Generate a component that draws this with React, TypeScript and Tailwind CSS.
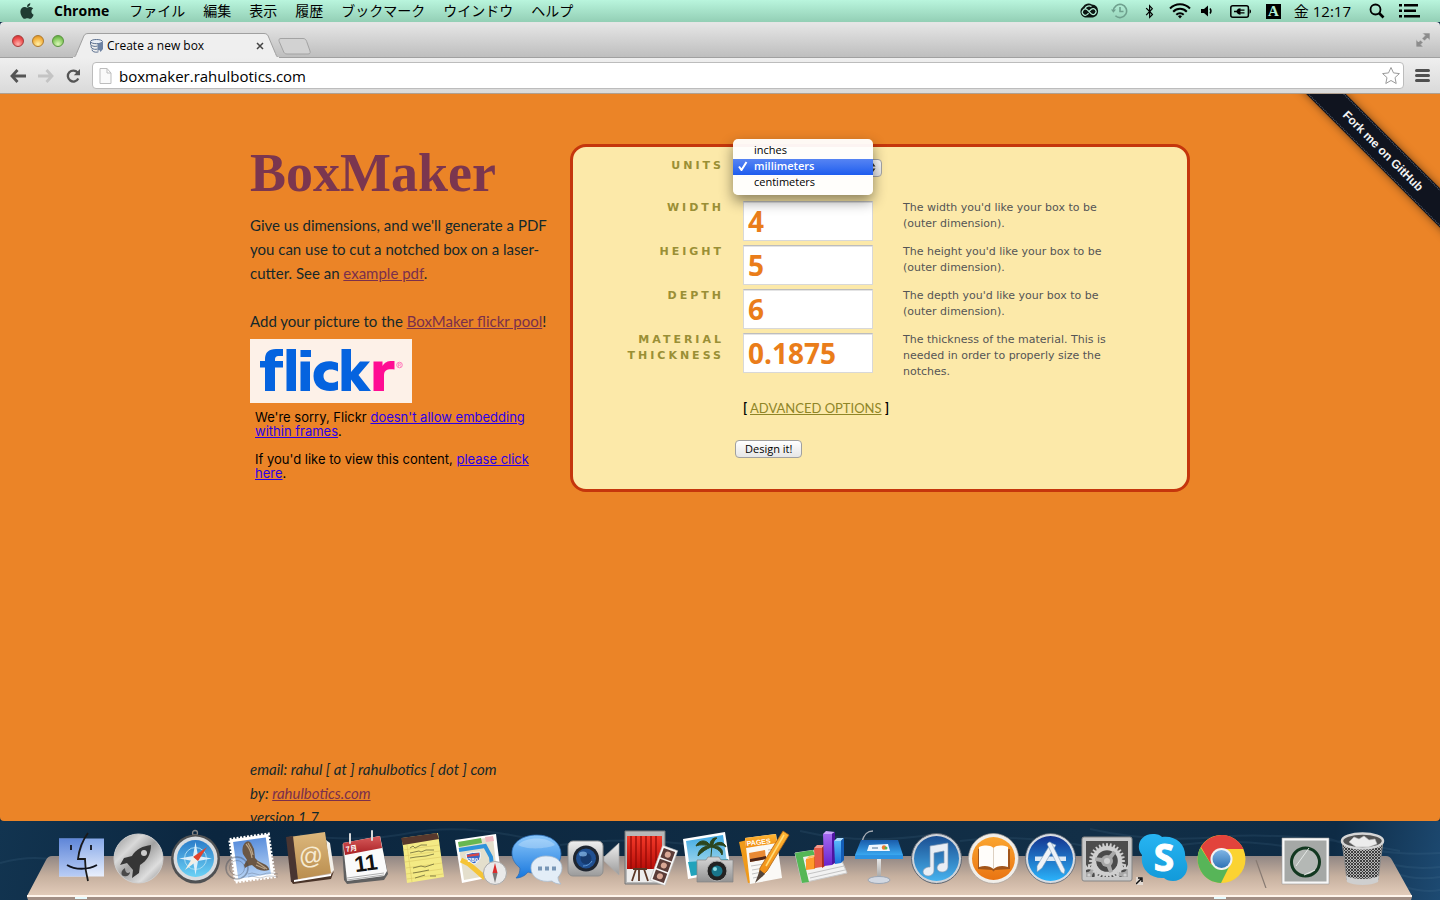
import type { ReactNode } from "react";
import { FaApple, FaBluetoothB } from "react-icons/fa";

const UI_FONT = "font-['Open_Sans','Noto_Sans_CJK_JP',sans-serif]";
const GILL = "font-[Lato,sans-serif]";

const menus = ["ファイル", "編集", "表示", "履歴", "ブックマーク", "ウインドウ", "ヘルプ"];

function MenuBar() {
  return (
    <header
      className={`${UI_FONT} flex h-[22px] shrink-0 items-center justify-between bg-linear-to-b from-[#b9f5dd] to-[#93cfb5] pr-5 pl-[18px] text-sm leading-5 text-black`}
    >
      <nav className="flex items-center gap-[18px]">
        <FaApple className="size-[18px] text-[#1f3b32]" aria-label="Apple" />
        <span className="mr-[2px] font-bold">Chrome</span>
        {menus.map((m) => (
          <span key={m}>{m}</span>
        ))}
      </nav>
      <div className="flex items-center">
        <svg width="20" height="16" viewBox="0 0 20 16" className="mr-3" aria-hidden="true">
          <path d="M6 14.500A6 6 0 0 1 4 3.800 6.500 6.500 0 0 1 13 1.500a6.600 6.600 0 0 1 1 13Z" fill="#0b1512" />
          <path d="M9.600 10.200 8.300 11.400a3 3 0 1 1 0-4.500l4 3.900a2.900 2.900 0 1 0 0-4.500L10 8.500M6 5.600a4.500 4.500 0 0 1 6.500-2" fill="none" stroke="#b4eed6" strokeWidth="1.200" />
        </svg>
        <svg width="17" height="16" viewBox="0 0 17 16" className="mr-[17px]" fill="none" stroke="#6fa08e" strokeWidth="1.600" aria-hidden="true">
          <path d="M2.400 8a6.600 6.600 0 1 1 2 4.700M9 4v4.500h3.500" />
          <path d="M0 6.500h5L2.400 9.800Z" fill="#6fa08e" stroke="none" />
        </svg>
        <FaBluetoothB className="mr-[15px] h-[15px] w-[9px]" />
        <svg width="22" height="16" viewBox="0 0 22 16" className="mr-[10px]" fill="none" stroke="#000" strokeWidth="2" aria-hidden="true">
          <path d="M1 5.500a14 14 0 0 1 20 0M4.200 8.700a9.500 9.500 0 0 1 13.600 0M7.300 11.700a5.200 5.200 0 0 1 7.400 0" />
          <path d="m11 15.500-2-2.200a2.900 2.900 0 0 1 4 0Z" fill="#000" stroke="none" />
        </svg>
        <svg width="13" height="12" viewBox="0 0 13 12" className="mr-4" aria-hidden="true">
          <path d="M0 4h3l4-3.500v11L3 8H0Z" />
          <path d="M9 3.500a4 4 0 0 1 0 5" fill="none" stroke="#000" strokeWidth="1.400" />
        </svg>
        <svg width="22" height="13" viewBox="0 0 22 13" className="mr-[14px]" aria-hidden="true">
          <rect x="0.800" y="0.800" width="17.600" height="11.400" rx="2" fill="none" stroke="#000" strokeWidth="1.500" />
          <path d="M19.500 4.300c2 .6 2 3.800 0 4.400Z" />
          <path d="M4 5.700h2.500C7.300 4 8.700 3.200 10.500 3.200v1.200h4v1.300h-4v1.500h4v1.300h-4v1.200C8.700 9.700 7.300 9 6.500 7.300H4Z" />
        </svg>
        <span className="mr-[13px] flex h-[15px] w-[15px] items-center justify-center bg-black font-['Liberation_Serif',serif] text-[15px] font-bold text-[#b4eed6]">
          A
        </span>
        <span className="mr-[18px] text-[15px]">金 12:17</span>
        <svg width="16" height="16" viewBox="0 0 16 16" className="mr-[14px]" fill="none" stroke="#000" strokeWidth="1.800" aria-hidden="true">
          <circle cx="6.500" cy="6.500" r="5" />
          <path d="m10 10 4.500 4.500" strokeWidth="2.600" />
        </svg>
        <svg width="21" height="14" viewBox="0 0 21 14" aria-hidden="true">
          <path d="M0 0h3v2.500H0zM0 5.500h3V8H0zM0 11h3v2.500H0zM5 0h14v2.500H5zM5 5.500h12V8H5zM5 11h16v2.500H5z" />
        </svg>
      </div>
    </header>
  );
}

function TabStrip() {
  return (
    <div
      className={`${UI_FONT} flex h-9 shrink-0 items-end justify-between rounded-t border-t border-white/60 bg-linear-to-b from-[#e6e6e6] to-[#bdbdbd] text-xs text-black shadow-[inset_0_-1px_0_#a0a0a0]`}
    >
      <div className="flex items-end">
        <div className="flex items-center gap-2 pb-[11px] pl-3">
          <button aria-label="Close window" className="size-3 rounded-full border border-[#a63a3a] bg-[radial-gradient(circle_at_50%_80%,#ffb4ae,#ee4c4c_60%,#c62b2b)]" />
          <button aria-label="Minimize window" className="size-3 rounded-full border border-[#b07a2c] bg-[radial-gradient(circle_at_50%_80%,#fff0a8,#f4b23e_60%,#cf8420)]" />
          <button aria-label="Zoom window" className="size-3 rounded-full border border-[#5a9440] bg-[radial-gradient(circle_at_50%_80%,#dcf7b8,#83c95c_60%,#519a35)]" />
        </div>
        <div className="relative ml-2 flex h-[25px] w-[208px] items-center pr-4 pl-[18px]">
          <svg className="absolute inset-0 size-full" viewBox="0 0 208 25" preserveAspectRatio="none" aria-hidden="true">
            <path d="M0 25c3 0 3.500-2 4.500-4.500L11 5c1-3 2-4.500 5-4.500h176c3 0 4 1.500 5 4.500l6.500 15.500c1 2.500 1.500 4.500 4.500 4.500Z" fill="#efefef" stroke="#a0a0a0" />
            <path d="M1 25h206" stroke="#efefef" strokeWidth="2" />
          </svg>
          <svg width="14" height="14" viewBox="0 0 14 14" className="relative mr-[3px] shrink-0" fill="none" stroke="#5b6f8e" aria-hidden="true">
            <ellipse cx="6.500" cy="2.600" rx="6" ry="2.100" fill="#e9eef6" />
            <path d="M.5 3v2.500c2 2.200 5 2.200 7 1.500M.8 6.500 1.500 9c2 1.500 4 1.600 6 1M2 10.500l.5 1.500c1.500 1.300 4 1.500 6 .8" />
            <path d="M7.500 4.500 13 3v7l-2.500 3-1-2-2 1Z" fill="#6d82a3" stroke="none" />
          </svg>
          <span className="relative">Create a new box</span>
          <button aria-label="Close tab" className="relative ml-auto">
            <svg width="8" height="8" viewBox="0 0 8 8" stroke="#444" strokeWidth="1.500" aria-hidden="true">
              <path d="m1 1 6 6M7 1 1 7" />
            </svg>
          </button>
        </div>
        <button aria-label="New tab" className="-ml-[2px] mb-[3px]">
          <svg width="34" height="17" viewBox="0 0 34 17" aria-hidden="true">
            <path d="M3 .5h22c2 0 3 1 3.700 3l3.300 9.500c.7 2-.2 3-2 3H9c-2 0-3-1-3.700-3L1.200 3.500C.6 1.500 1 .5 3 .5Z" fill="#d2d2d2" stroke="#a3a3a3" />
          </svg>
        </button>
      </div>
      <svg width="14" height="14" viewBox="0 0 14 14" className="mr-[10px] mb-[11px]" fill="#8c8c8c" aria-hidden="true">
        <path d="M6.500 0H14v7.500l-2.500-2.500-3 3L6 5.500l3-3ZM7.500 14H0V6.500L2.500 9l2-2L7 9.500l-2 2Z" stroke="#d8d8d8" strokeWidth=".6" />
      </svg>
    </div>
  );
}

function Toolbar() {
  return (
    <div className={`${UI_FONT} flex h-9 shrink-0 items-center border-b border-[#b0a090] bg-linear-to-b from-[#efefef] to-[#dadada] pr-[10px] pl-[10px]`}>
      <button aria-label="Back" className="mr-3">
        <svg width="16" height="14" viewBox="0 0 16 14" fill="none" stroke="#555" strokeWidth="2.800" aria-hidden="true">
          <path d="M7.500 1 2 7l5.500 6M2.500 7H16" />
        </svg>
      </button>
      <button aria-label="Forward" className="mr-3">
        <svg width="16" height="14" viewBox="0 0 16 14" fill="none" stroke="#c4c4c4" strokeWidth="2.800" aria-hidden="true">
          <path d="M8.500 1 14 7l-5.500 6M13.500 7H0" />
        </svg>
      </button>
      <button aria-label="Reload" className="mr-[11px]">
        <svg width="15" height="14" viewBox="0 0 15 14" fill="none" stroke="#555" strokeWidth="2.300" aria-hidden="true">
          <path d="M11.600 3.500A5.500 5.500 0 1 0 12.300 9.500" />
          <path d="M14 0v6.200H7.800Z" fill="#555" stroke="none" />
        </svg>
      </button>
      <div className="flex h-[27px] min-w-0 flex-1 items-center rounded-sm border border-[#bcbcbc] bg-white px-[6px]">
        <svg width="13" height="16" viewBox="0 0 13 16" className="mr-[7px] shrink-0" fill="#fafafa" stroke="#bdbdbd" aria-hidden="true">
          <path d="M1 .5h7L12 5v10.500H1ZM8 .5V5h4" />
        </svg>
        <input
          aria-label="Address"
          defaultValue="boxmaker.rahulbotics.com"
          className="min-w-0 flex-1 bg-transparent text-[15px] leading-5 text-black outline-none"
        />
        <svg width="20" height="19" viewBox="0 0 20 19" className="-mr-1 shrink-0" fill="none" stroke="#9a9a9a" strokeLinejoin="round" aria-hidden="true">
          <path d="m10 1.500 2.500 5.400 5.900.7-4.400 4 1.200 5.900-5.200-3-5.200 3L6 11.600l-4.400-4 5.900-.7Z" />
        </svg>
      </div>
      <button aria-label="Chrome menu" className="ml-[11px]">
        <svg width="15" height="13" viewBox="0 0 15 13" stroke="#4f4f4f" strokeWidth="3" strokeLinecap="round" aria-hidden="true">
          <path d="M1.500 1.500h12M1.500 6.500h12M1.500 11.500h12" />
        </svg>
      </button>
    </div>
  );
}

const link = "text-[#7a2f4c] underline";

function Intro() {
  return (
    <section className={`${GILL} w-[300px] shrink-0 text-[15px] leading-6 whitespace-nowrap text-[#14282b]`}>
      <h1 className="font-['Liberation_Serif',serif] text-[54px] leading-[58px] font-bold text-[#7b364f]">BoxMaker</h1>
      <p className="mt-[11px]">
        Give us dimensions, and we'll generate a PDF
        <br />
        you can use to cut a notched box on a laser-
        <br />
        cutter. See an{" "}
        <a href="#example" className={link}>
          example pdf
        </a>
        .
      </p>
      <p className="mt-6">
        Add your picture to the{" "}
        <a href="#pool" className={link}>
          BoxMaker flickr pool
        </a>
        !
      </p>
      <div className="mt-[6px] h-16 w-[162px] bg-[#fdf1e8]">
        <svg width="162" height="64" viewBox="0 0 162 64" role="img" aria-label="flickr">
          <g fill="#0563df">
            <path d="M15 52V28.500h-5V22h5v-1.500C15 13.500 18.500 10 26 10h7v7h-4c-3 0-4 1-4 4v1h8v6.500h-8V52Z" />
            <path d="M36.500 10H46v42h-9.500ZM50.500 11H61v7H50.500ZM50.500 22.500H60V52h-9.500ZM91.500 10H101v23l9-10.500h10L108.500 36 121 52h-11.500L101 40.500V52h-9.500Z" />
            <path d="M88 24v8.500C80 28.500 73.500 31 73.500 37S80 46 88 42v8.800C76 54.500 63.500 50 63.500 37S76 19.500 88 24Z" />
          </g>
          <path d="M123.500 22.500h9V27c2.500-4.500 6-5.500 12-5v8.500c-7-.8-10.500.5-10.500 6V52h-10.500Z" fill="#ff0c93" />
          <circle cx="149.500" cy="26" r="2.800" fill="none" stroke="#ff5fb0" strokeWidth=".8" />
          <path d="M148.500 27.800v-3.300h1.300c1.200 0 1.200 1.600 0 1.600h-1.300M149.800 26.200l.9 1.500" fill="none" stroke="#ff5fb0" strokeWidth=".6" />
        </svg>
      </div>
      <div className="mt-[7px] pl-[5px] font-[Inter,sans-serif] text-[13px] leading-[14px] text-black">
        <p>
          We're sorry, Flickr{" "}
          <a href="#frames" className="text-[#2a00e8] underline">
            doesn't allow embedding
            <br />
            within frames
          </a>
          .
        </p>
        <p className="mt-[14px]">
          If you'd like to view this content,{" "}
          <a href="#content" className="text-[#2a00e8] underline">
            please click
            <br />
            here
          </a>
          .
        </p>
      </div>
    </section>
  );
}

const labelClass =
  "font-['DejaVu_Sans',sans-serif] w-[151px] shrink-0 text-right text-[11px] leading-4 font-bold tracking-[3px] text-[#9a8f35] uppercase";

const fields = [
  { id: "width", label: "Width", value: "4", help: "The width you'd like your box to be (outer dimension)." },
  { id: "height", label: "Height", value: "5", help: "The height you'd like your box to be (outer dimension)." },
  { id: "depth", label: "Depth", value: "6", help: "The depth you'd like your box to be (outer dimension)." },
  { id: "thickness", label: "Material Thickness", value: "0.1875", help: "The thickness of the material. This is needed in order to properly size the notches." },
];

function BoxForm() {
  return (
    <form
      className="flex-1 rounded-2xl border-3 border-[#c5360c] bg-[#fce9a9] pt-[11px] pb-[31px]"
      onSubmit={(e) => e.preventDefault()}
    >
      <div className="relative flex h-[42px]">
        <label htmlFor="units" className={labelClass}>
          Units
        </label>
        <select
          id="units"
          defaultValue="millimeters"
          className={`${UI_FONT} mt-px ml-[11px] h-[18px] w-[147px] appearance-none rounded border border-[#a5a5a5] bg-linear-to-b from-white to-[#e4e4e4] pl-2 text-[11px]`}
        >
          <option>inches</option>
          <option>millimeters</option>
          <option>centimeters</option>
        </select>
        <svg width="6" height="9" viewBox="0 0 6 9" className="-ml-3 mt-[5px]" aria-hidden="true">
          <path d="M3 0 5.500 3.500h-5ZM3 9 .5 5.500h5Z" fill="#333" />
        </svg>
        <ul
          role="listbox"
          aria-label="Units"
          className={`${UI_FONT} absolute -top-[19px] left-40 z-10 w-[140px] rounded-[5px] bg-white/95 py-1 text-[11px] leading-[14px] text-black shadow-[0_6px_14px_rgba(0,0,0,0.45)]`}
        >
          <li role="option" aria-selected="false" className="pb-[2px] pl-[21px]">
            inches
          </li>
          <li
            role="option"
            aria-selected="true"
            className="flex items-center bg-linear-to-b from-[#5684f3] to-[#1d5cee] pb-[2px] pl-[5px] font-semibold text-white"
          >
            <svg width="10" height="10" viewBox="0 0 10 10" className="mr-[6px]" fill="none" stroke="#fff" strokeWidth="2" aria-hidden="true">
              <path d="M1 5.500 3.500 9 8.500 1" />
            </svg>
            millimeters
          </li>
          <li role="option" aria-selected="false" className="pb-[2px] pl-[21px]">
            centimeters
          </li>
        </ul>
      </div>
      {fields.map((f) => (
        <div key={f.id} className="flex min-h-11 items-start">
          <label htmlFor={f.id} className={labelClass}>
            {f.label}
          </label>
          <input
            id={f.id}
            defaultValue={f.value}
            className={`${UI_FONT} mt-px ml-[19px] h-10 w-[130px] border border-[#d8d8d8] border-t-[#bdbdbd] bg-white px-1 text-[28px] font-bold text-[#ea7d1a] shadow-[inset_0_1px_0_#e4e4e4] outline-none`}
          />
          <p className="ml-[30px] w-[220px] font-['DejaVu_Sans',sans-serif] text-[11px] leading-4 text-[#555555]">{f.help}</p>
        </div>
      ))}
      <p className={`${GILL} mt-5 pl-[170px] text-[13px] leading-4 text-black`}>
        <b>[</b>{" "}
        <a href="#advanced" className="text-[#8f8527] underline">
          ADVANCED OPTIONS
        </a>{" "}
        <b>]</b>
      </p>
      <button
        type="submit"
        className={`${UI_FONT} mt-6 ml-[162px] block h-[18px] rounded border border-[#a0a0a0] bg-linear-to-b from-white to-[#e6e6e6] px-[9px] text-[11px] leading-4 text-black`}
      >
        Design it!
      </button>
    </form>
  );
}

function Page() {
  return (
    <main className="relative min-h-0 flex-1 overflow-hidden rounded-b bg-[#eb8427]">
      <a
        href="#github"
        className="absolute top-[43px] -right-[53px] flex h-7 w-[220px] rotate-45 items-center justify-center bg-[#10141f] font-['Liberation_Sans',sans-serif] text-[12px] font-bold text-[#f2f2f2] shadow-[0_0_8px_rgba(0,0,0,0.5)] outline-1 -outline-offset-2 outline-[#5b6472] outline-dotted"
      >
        Fork me on GitHub
      </a>
      <div className="mx-auto w-[940px] max-w-full pt-[50px]">
        <div className="flex items-start gap-5">
          <Intro />
          <BoxForm />
        </div>
        <footer className={`${GILL} mt-[265px] text-[15px] leading-6 text-[#14282b] italic`}>
          <p>email: rahul [ at ] rahulbotics [ dot ] com</p>
          <p>
            by:{" "}
            <a href="#rahul" className={link}>
              rahulbotics.com
            </a>
          </p>
          <p>version 1.7</p>
        </footer>
      </div>
    </main>
  );
}

function Icon({ name, children }: { name: string; children: ReactNode }) {
  return (
    <button aria-label={name} className="shrink-0">
      <svg width="57" height="60" viewBox="0 0 57 60" aria-hidden="true">
        {children}
      </svg>
    </button>
  );
}

function Gradients() {
  const g: [string, string, string][] = [
    ["finderL", "#5f86d8", "#b9cdf5"],
    ["finderR", "#86a8e8", "#e9effc"],
    ["safari", "#2a7cc9", "#6cd2f5"],
    ["sky", "#5b8fdc", "#b5d2f5"],
    ["tan", "#dcb77c", "#b98d4e"],
    ["red", "#d75b5b", "#a81f24"],
    ["bubble", "#8cc8fb", "#1877dd"],
    ["grey", "#d7d7d7", "#929292"],
    ["curtain", "#f43a2a", "#b80d08"],
    ["beach", "#3fa9e4", "#bfe6ee"],
    ["gold", "#ffb735", "#ef8a12"],
    ["keynote", "#1a5cab", "#3aa8f0"],
    ["itunes", "#1b4f92", "#47b2ee"],
    ["ibooks", "#fba530", "#e97412"],
    ["appstore", "#14338f", "#2bb3fa"],
    ["purple", "#a46af0", "#6a23cc"],
    ["blue", "#58b8fb", "#1b71da"],
    ["chromeBlue", "#7fb4e4", "#2f73b5"],
    ["skype", "#27b4f2", "#129ad9"],
    ["metal", "#efefef", "#9b9b9b"],
  ];
  return (
    <svg width="0" height="0" className="absolute" aria-hidden="true">
      <defs>
        {g.map(([id, a, b]) => (
          <linearGradient key={id} id={id} x1="0" y1="0" x2="0" y2="1">
            <stop offset="0" stopColor={a} />
            <stop offset="1" stopColor={b} />
          </linearGradient>
        ))}
        <linearGradient id="brushed" x1="0" y1="0" x2="1" y2="1">
          <stop offset="0" stopColor="#8f8f8f" />
          <stop offset=".3" stopColor="#d9d9d9" />
          <stop offset=".5" stopColor="#a1a1a1" />
          <stop offset=".75" stopColor="#dedede" />
          <stop offset="1" stopColor="#858585" />
        </linearGradient>
        <pattern id="mesh" width="3" height="3" patternUnits="userSpaceOnUse">
          <rect width="3" height="3" fill="#b5b5b5" />
          <path d="M0 0 3 3M3 0 0 3" stroke="#333" strokeWidth=".9" />
        </pattern>
        <linearGradient id="shelf" x1="0" y1="0" x2="0" y2="1">
          <stop offset="0" stopColor="#968a86" />
          <stop offset=".5" stopColor="#cdb5a2" />
          <stop offset="1" stopColor="#ecd3bf" />
        </linearGradient>
      </defs>
    </svg>
  );
}

function Gear({ cx, cy, r, teeth }: { cx: number; cy: number; r: number; teeth: number }) {
  return (
    <g transform={`translate(${cx} ${cy})`} fill="#cfcfcf">
      {Array.from({ length: teeth }, (_, i) => (
        <path key={i} d={`M-1.400 ${-r + 1} -.7 ${-r - 3}H.7L1.400 ${-r + 1}Z`} transform={`rotate(${(i * 360) / teeth})`} />
      ))}
      <circle r={r} />
      <circle r={r * 0.72} fill="#4a4a4a" />
      {[0, 120, 240].map((a) => (
        <path key={a} d={`M-2.500 0 -1.800 ${-r * 0.8}H1.800L2.500 0Z`} fill="#aaa" transform={`rotate(${a + 40})`} />
      ))}
      <circle r={r * 0.4} fill="#a8a8a8" />
      <circle r={r * 0.2} fill="#d0d0d0" />
    </g>
  );
}

function Dock() {
  return (
    <footer className="relative h-[79px] shrink-0 bg-[linear-gradient(100deg,#123450_0%,#0b263f_15%,#122f47_75%,#0e2b45_92%,#1d4a72_100%)]">
      <Gradients />
      <svg className="absolute inset-0 size-full" viewBox="0 0 1440 79" preserveAspectRatio="none" fill="none" stroke="#5e86a6" strokeOpacity=".14" strokeWidth="2" aria-hidden="true">
        <path d="M0 42q30-8 55-3M300 14q60 8 110-2t120 6M560 24q70-10 150 2M800 10q60 14 130 4M960 20q60-8 130 6M1090 8q60 14 130 8t180 14M1180 24q60-8 120 4M1330 18q50 18 110 14M1395 52q20 8 45 4M1405 66q20 6 35 3M1370 36q30 14 70 10" />
      </svg>
      <svg className="absolute bottom-0 left-0 h-[44px] w-full" viewBox="0 0 1440 44" preserveAspectRatio="none" aria-hidden="true">
        <path d="M52 0H1386q4 0 6 4l20 36H27L46 4q2-4 6-4Z" fill="url(#shelf)" opacity=".96" />
        <path d="M27 39H1412v2H27Z" fill="#fff5ec" />
        <path d="M27 41H1412l-1 3H28Z" fill="#a28f85" />
        <path d="M75 41h12v2H75ZM1214 41h12v2h-12Z" fill="#e5fbff" />
      </svg>
      <nav aria-label="Dock" className="relative flex justify-center pt-[7px] pl-1">
        <Icon name="Finder">
          <path d="M6 10.500h45v38H6Z" fill="url(#finderR)" />
          <path d="M6 10.500h26L25 32h7l1 16.500H6Z" fill="url(#finderL)" />
          <path d="M35 5c-6 8-9 17-10 26h7c0 8 1 15 3 22" fill="none" stroke="#191919" strokeWidth="1.800" />
          <path d="M18 17v5M38 17v5M14 37c8 5 21 5 30 0" fill="none" stroke="#10131c" strokeWidth="1.800" />
        </Icon>
        <Icon name="Launchpad">
          <circle cx="28.500" cy="30.500" r="24.500" fill="url(#brushed)" stroke="#cfcfcf" />
          <path d="M41 17c-8 1-15 4-19 11l-8 2-4 7 7-2 6 7-1 8 7-5 1-8c7-4 11-11 11-20Z" fill="#363636" />
          <circle cx="34" cy="25" r="3" fill="#ccc" />
          <path d="M15 40c-5 3-4 8-1 8 3 1 6-1 6-4-2 2-5 1-5-4Z" fill="#4a4a4a" />
        </Icon>
        <Icon name="Safari">
          <circle cx="28" cy="5" r="2.500" fill="none" stroke="#888" strokeWidth="1.300" />
          <path d="M25 6h6v4h-6Z" fill="#777" />
          <circle cx="28.500" cy="31" r="24.500" fill="#4f5153" />
          <circle cx="28.500" cy="30.500" r="22" fill="#d9dcdf" />
          <circle cx="28.500" cy="30.500" r="18.500" fill="url(#safari)" />
          <circle cx="28.500" cy="30.500" r="11" fill="none" stroke="#a9dcf2" />
          <path d="m28.500 14 2.500 14 14 2.500-14 2.500-2.500 14-2.500-14-14-2.500L26 28Z" fill="#dceffa" />
          <path d="m40 19-14 10 5 4Z" fill="#e2432c" />
          <path d="m18 42 8-13 4 4Z" fill="#f2efe6" />
        </Icon>
        <Icon name="Mail">
          <g transform="rotate(-8 28.500 30)">
            <path d="M8.500 8.500h39v43h-39Z" fill="#fff" stroke="#fff" strokeWidth="3" strokeDasharray="2 1.500" />
            <path d="M11.500 11.500h33v37h-33Z" fill="url(#sky)" />
          </g>
          <path d="M22 14q3-2 5 1l3 6 1 9 3 3 8 4q4 3 3 5-6 2-12-1l-5-4-4 1-3 2-1-3 3-5-4-6q-2-8 3-12Z" fill="#6b5745" />
          <path d="M22 16q5 6 6 14M24 15q4 6 5 12M33 34l10 7M32 37l9 4" stroke="#b9a488" strokeWidth="1.200" fill="none" />
          <circle cx="13" cy="40" r="11" fill="none" stroke="#3d4654" strokeOpacity=".4" strokeWidth="1.500" />
          <circle cx="13" cy="40" r="7.500" fill="none" stroke="#3d4654" strokeOpacity=".3" />
          <path d="M24 46q4-2 8 0t8 0 14 0M24 49q4-2 8 0t8 0 14 0" fill="none" stroke="#3d4654" strokeOpacity=".35" strokeWidth=".8" />
        </Icon>
        <Icon name="Contacts">
          <path d="m10 53 40-6 3-4-3 8-38 5Z" fill="#4a3428" />
          <path d="m45 12 4 3 4 27-4 4Z" fill="#f3f0ea" />
          <path d="m8 9 36-5 6 41-37 7Z" fill="url(#tan)" />
          <path d="m5 9 7-1 5 44-7 2Z" fill="#493531" />
          <path d="m13 52 37-6v2l-37 6Z" fill="#fff" />
          <text x="30" y="36" textAnchor="middle" transform="rotate(-7 30 30)" fontFamily="Liberation Sans" fontSize="24" fill="#f6ead1">@</text>
        </Icon>
        <Icon name="Calendar">
          <path d="m4 16 38-8 8 38-4 6-37 4-3-4Z" fill="#606060" />
          <path d="m5 15 37-7 7 35-3 5-37 5Z" fill="#fafafa" />
          <path d="m5 15 37-7 2 12-37 7Z" fill="url(#red)" />
          <path d="M12 6v9M34 3v9" stroke="#d9d9d9" strokeWidth="2" strokeLinecap="round" />
          <path d="m9 50 37-5M9 52l37-5" stroke="#8c8c8c" strokeWidth=".7" />
          <text x="8" y="24" transform="rotate(-9 8 22)" fontFamily="Noto Sans CJK JP" fontSize="7" fontWeight="700" fill="#fff">7月</text>
          <text x="28" y="43" textAnchor="middle" transform="rotate(-8 26 36)" fontFamily="Liberation Sans" fontSize="22" fontWeight="700" fill="#111">11</text>
        </Icon>
        <Icon name="Notes">
          <path d="m7 10 36-5 6 44-37 6Z" fill="#f4ea84" />
          <path d="m6 10 36-5 2 6-36 6Z" fill="#58382c" />
          <path d="m8 22 36-5M9 28l36-5M10 34l36-5M11 40l36-5M11 46l36-5M12 51l36-5M12 17l5 37" stroke="#ddcb68" strokeWidth=".7" />
          <path d="m15 20 3-2 2 2 6-3 6 0M15 25l9-2 2 1 5-2 8 0M15 30l6-1 10-1 8-2M18 40l8-2 4 1 9-3M18 45l6-1 10-2M20 50l10-3M35 48h6" fill="none" stroke="#6b683a" strokeWidth=".8" />
        </Icon>
        <Icon name="Maps">
          <path d="m3 12 41-6 5 41-39 8Z" fill="#fff" />
          <path d="m6 14 35-5 4 37-33 6Z" fill="#e4dfcc" />
          <path d="m6 14 23-4 1 5-23 4Z" fill="#67b752" />
          <path d="m33 9 8-1 1 5-8 1Z" fill="#f0b8bf" />
          <path d="m7 22 26-4 6 11 2 17" fill="none" stroke="#2f93dc" strokeWidth="4" />
          <path d="m9 32 8 4 16 14" fill="none" stroke="#f5c436" strokeWidth="5" />
          <path d="M14 26q6-2 14-2 2 9-6 12-8-3-8-10Z" fill="#3a68c4" stroke="#fff" />
          <path d="m15 27 12-2v2.500l-12 1.500Z" fill="#d94747" />
          <text x="21" y="34" textAnchor="middle" fontFamily="Liberation Sans" fontSize="6" fontWeight="700" fill="#fff">280</text>
          <circle cx="43" cy="45" r="11.500" fill="#e9e9e9" stroke="#aaa" />
          <path d="m43 35 2.500 10h-5Z" fill="#d92b2b" />
          <path d="m43 55 2.500-10h-5Z" fill="#777" />
        </Icon>
        <Icon name="Messages">
          <path d="M28 7c14 0 24 8 24 19S42 45 28 45c-4 0-7 0-9-1-3 4-8 6-12 6 3-3 4-6 4-10C6 36 3 31 3 25 3 14 14 7 28 7Z" fill="url(#bubble)" stroke="#2d6fb8" strokeWidth=".8" />
          <path d="M9 17C16 9 38 8 46 17c-8 4-29 5-37 0Z" fill="#fff" opacity=".25" />
          <path d="M37 28c10 0 16 5 16 12 0 4-2 7-4 9 0 3 1 5 3 7-4 0-7-1-9-3-12 2-21-4-21-13 0-7 6-12 15-12Z" fill="#e3edf7" stroke="#a9bccf" strokeWidth=".8" />
          <path d="M29 38.500h4v4h-4ZM36 38.500h4v4h-4ZM43 38.500h4v4h-4Z" fill="#7896b6" />
        </Icon>
        <Icon name="FaceTime">
          <path d="M53 15v32L38 33v-4Z" fill="url(#metal)" stroke="#aaa" strokeWidth=".7" />
          <rect x="2" y="13" width="35" height="35" rx="5" fill="url(#metal)" stroke="#8f8f8f" />
          <circle cx="20" cy="30.500" r="13" fill="#1e2530" />
          <circle cx="20" cy="30.500" r="10" fill="#1f4f91" />
          <circle cx="20" cy="30.500" r="5.500" fill="#163a6e" />
          <ellipse cx="17" cy="26" rx="4" ry="2.500" fill="#7eafe0" opacity=".8" />
          <path d="M17 38q6 0 9-5" fill="none" stroke="#5f98d4" />
        </Icon>
        <Icon name="Photo Booth">
          <path d="M2 3h40v53H2Z" fill="#b8b8b8" stroke="#777" />
          <path d="M4 41h36v13H4Z" fill="#ededed" />
          <path d="M4 8h35v33H4Z" fill="url(#curtain)" />
          <path d="M8 8v33M13 8v33M18 8v33M23 8v33M28 8v33M33 8v33" stroke="#8f0905" strokeWidth="1.200" />
          <path d="M10 41h14M13 41l-4 12M21 41l4 12M16 41v12" stroke="#5b3726" strokeWidth="1.800" />
          <g transform="rotate(20 41 37)">
            <path d="M33 19h16v37H33Z" fill="#f8f8f8" stroke="#bbb" strokeWidth=".6" />
            <path d="M35 21h12v10H35ZM35 32.500h12v10H35ZM35 44h12v10H35Z" fill="#5b3c38" />
            <circle cx="41" cy="26" r="3" fill="#d8a795" /><circle cx="41" cy="37.500" r="3" fill="#d8a795" /><circle cx="41" cy="49" r="3" fill="#d8a795" />
          </g>
        </Icon>
        <Icon name="iPhoto">
          <path d="m3 11 42-7 6 39-43 8Z" fill="#fff" />
          <path d="m6 13 37-6 5 34-37 7Z" fill="url(#beach)" />
          <path d="m8 34 40-3v10l-37 7Z" fill="#22a3bb" />
          <path d="m32 17 -2 22M30 17c-5-7-12-4-14 1 5-2 9-1 14 0-8 0-12 5-12 10 4-4 8-7 13-9 5 1 9 3 11 8 2-6-3-9-8-9 6-2 9-1 12 1-2-6-9-6-13-1 0-3 1-6 4-8-4-1-7 3-7 7Z" fill="#2b451e" stroke="#2b451e" />
          <path d="M17 32h9l2-3h11l2 3h12v22H17Z" fill="url(#grey)" stroke="#858585" strokeWidth=".7" />
          <circle cx="37" cy="43" r="10" fill="#222" stroke="#aaa" />
          <circle cx="37" cy="43" r="5.500" fill="#19768b" />
          <circle cx="35" cy="41" r="2" fill="#8edde5" />
        </Icon>
        <Icon name="Pages">
          <path d="m2 14 8-2 6 42-5 1Z" fill="#f09a1a" />
          <path d="m8 10 31-4 6 44-32 6Z" fill="#faf9f6" />
          <path d="m8 10 31-4 1 9-31 5Z" fill="url(#gold)" />
          <text x="10" y="18" transform="rotate(-7 10 18)" fontFamily="Liberation Sans" fontSize="7" fontWeight="700" fill="#fff">PAGES</text>
          <path d="m12 25 16-3 1 9-16 3Z" fill="#e98a35" />
          <path d="m13 31 16-3v3l-16 3Z" fill="#4d2518" />
          <path d="m31 22 7-1M31 25l8-1M14 38l20-3M15 42l18-3M15 46l15-3M16 50l10-2" stroke="#b5b5b5" strokeWidth=".8" />
          <path d="m46 3 6 4-22 36-6 6-2-2 1-7Z" fill="url(#gold)" stroke="#ad6416" strokeWidth=".8" />
          <path d="m18 55 5-13 5 4Z" fill="#54453a" />
          <path d="m47 7-18 31" stroke="#ffdc7a" strokeWidth="1.500" />
        </Icon>
        <Icon name="Numbers">
          <path d="m1 25 41-6 11 26-45 10Z" fill="#f2f2f2" stroke="#c9c9c9" />
          <path d="m1 25 18-3 2 5-12 2 6 25-7 1Z" fill="#55b756" />
          <path d="m11 33 37-6M14 46l36-8M16 50l35-8" stroke="#c4c4c4" />
          <path d="m12 31 8-2v12l-8 1Z" fill="#ff9b2b" /><path d="m12 31 3-3 8-1-3 2Z" fill="#ffc26a" /><path d="m20 29 3-2v12l-3 2Z" fill="#d56d0d" />
          <path d="M20 20h8v19l-7 1Z" fill="#e55a46" /><path d="m20 20 3-3h8l-3 3Z" fill="#f4988c" /><path d="m28 20 3-3v21l-3 2Z" fill="#ad2e1d" />
          <path d="M29 6h9v31l-8 1Z" fill="url(#purple)" /><path d="m29 6 3-3 9 1-3 2Z" fill="#c9a5fb" /><path d="m38 6 3-2v31l-3 2Z" fill="#4c15a0" />
          <path d="M40 13h7v22l-6 1Z" fill="url(#blue)" /><path d="m40 13 3-3h7l-3 3Z" fill="#a9dbff" /><path d="m47 13 3-3v22l-3 3Z" fill="#135db6" />
        </Icon>
        <Icon name="Keynote">
          <path d="M11 14c2-8 5-11 11-11" fill="none" stroke="#a7adb5" strokeWidth="1.500" />
          <path d="M26 29h4v24h-4Z" fill="url(#metal)" />
          <ellipse cx="28" cy="52" rx="11" ry="3.500" fill="#d2d8e2" stroke="#9ca6b4" />
          <path d="M10 12h37l5 15H4Z" fill="url(#keynote)" />
          <path d="M4 27h48v4H4Z" fill="#2c93e2" />
          <path d="m18 17 19-1 2 7H16Z" fill="#f0f7ff" />
          <path d="M21 19h6v2h-6Z" fill="#9db4ca" /><circle cx="33" cy="19.500" r="2.200" fill="#ed7b2d" /><circle cx="35" cy="20" r="1.500" fill="#56b94f" />
        </Icon>
        <Icon name="iTunes">
          <circle cx="28.500" cy="30.500" r="25" fill="#cfd3d8" stroke="#5d6570" />
          <circle cx="28.500" cy="30.500" r="22.500" fill="url(#itunes)" />
          <path d="m22 18 18-3v24c0 3-3 5-6 5s-5-2-5-4 2-5 5-5h2V23l-10 2v17c0 4-3 6-6 6s-5-2-5-4c0-3 3-5 7-5Z" fill="#e9eef5" stroke="#8399b3" strokeWidth=".7" />
        </Icon>
        <Icon name="iBooks">
          <circle cx="28.500" cy="30.500" r="25" fill="#f1eee9" stroke="#a8a19b" strokeWidth=".7" />
          <circle cx="28.500" cy="30.500" r="21.500" fill="url(#ibooks)" />
          <path d="M13 21v20l14 1 1.500 1.500L30 42l15-1V21l-16 2Z" fill="#a2551a" />
          <path d="M14 19c6-2 11-2 14.500 1C32 17 37 17 43 19v20c-6-2-11-1-14.500 2C25 38 20 37 14 39Z" fill="#fffdfa" />
          <path d="M28.500 20v21" stroke="#ddd0c1" />
        </Icon>
        <Icon name="App Store">
          <circle cx="28.500" cy="30.500" r="25" fill="#d8dce2" stroke="#5c6470" strokeWidth=".8" />
          <circle cx="28.500" cy="30.500" r="22.500" fill="url(#appstore)" />
          <path d="M13 28.500h31v4.500H13Z" fill="#dce9f5" />
          <path d="m29 15 5 2-14 23-5 4v-6Z" fill="#f0f4f8" stroke="#7898b6" strokeWidth=".6" />
          <path d="M25 16q3-4 5 0l13 26-1 4-3-2Z" fill="#edf2f8" stroke="#7898b6" strokeWidth=".6" />
        </Icon>
        <Icon name="System Preferences">
          <rect x="3" y="9" width="50" height="44" rx="2" fill="#c8c8c8" stroke="#868686" />
          <path d="M7 13h42v36H7Z" fill="#4d4d4d" />
          <svg x="7" y="13" width="42" height="36" viewBox="0 0 42 36">
            <Gear cx={3} cy={34} r={8} teeth={18} />
            <Gear cx={39} cy={34} r={8} teeth={18} />
            <Gear cx={21} cy={20} r={15} teeth={28} />
          </svg>
        </Icon>
        <Icon name="Skype">
          <path d="M17 6c5 0 7 1 9 3 14-2 25 8 23 22 6 9 0 22-12 22-4 0-7-1-9-3C14 51 4 41 6 27-1 19 4 6 17 6Z" fill="url(#skype)" />
          <text x="28" y="43" textAnchor="middle" fontFamily="Open Sans" fontSize="37" fontWeight="700" fill="#fff" stroke="#fff">S</text>
          <path d="M0 49h7v8H0Z" fill="#eee" opacity=".6" />
          <path d="m0 56 5-5M2 50h4v4" fill="none" stroke="#111" strokeWidth="1.500" />
        </Icon>
        <Icon name="Chrome">
          <circle cx="28.500" cy="31" r="24" fill="#fbd332" />
          <path d="M7.500 19.500 18 36 28.500 42 37 37 28 55A24 24 0 0 1 7.500 19.500Z" fill="#57b558" />
          <path d="M8 19A24 24 0 0 1 50.500 21H28.500L18 36Z" fill="#e2433c" />
          <circle cx="28.500" cy="31" r="11" fill="#f2f2f2" />
          <circle cx="28.500" cy="31" r="9" fill="url(#chromeBlue)" />
        </Icon>
        <svg width="27" height="60" viewBox="0 0 27 60" className="shrink-0" aria-hidden="true">
          <path d="m6 32 11 31" stroke="#877a72" strokeWidth="1.200" />
        </svg>
        <Icon name="Folder stack">
          <path d="M5 10h47v46H5Z" fill="#f8f8f8" stroke="#9c9c9c" strokeWidth=".6" />
          <path d="M7.500 12.500h42v41h-42Z" fill="#a5a8a6" />
          <circle cx="28.500" cy="34" r="14" fill="#b4b8b5" stroke="#123820" strokeWidth="3" />
          <path d="m19 38 13-18M27 47l11-5" stroke="#e4e8e5" />
        </Icon>
        <Icon name="Trash">
          <path d="M8 13h41l-5 39c-6 5-25 5-31 0Z" fill="url(#mesh)" stroke="#8a8a8a" />
          <path d="M12 48c8 4 25 4 33 0l-1 6c-7 4-24 4-31 0Z" fill="#cfcfcf" />
          <ellipse cx="28.500" cy="13" rx="20.500" ry="7.500" fill="#535353" stroke="#d6d6d6" strokeWidth="2.500" />
          <path d="m15 14 5-5 5 2 5-3 5 4 6-1 2 5-8 3H22Z" fill="#ececec" stroke="#bbb" strokeWidth=".6" />
        </Icon>
      </nav>
    </footer>
  );
}

export default function App() {
  return (
    <div className="flex h-screen flex-col overflow-hidden bg-[#0d2b47]">
      <MenuBar />
      <TabStrip />
      <Toolbar />
      <Page />
      <Dock />
    </div>
  );
}
